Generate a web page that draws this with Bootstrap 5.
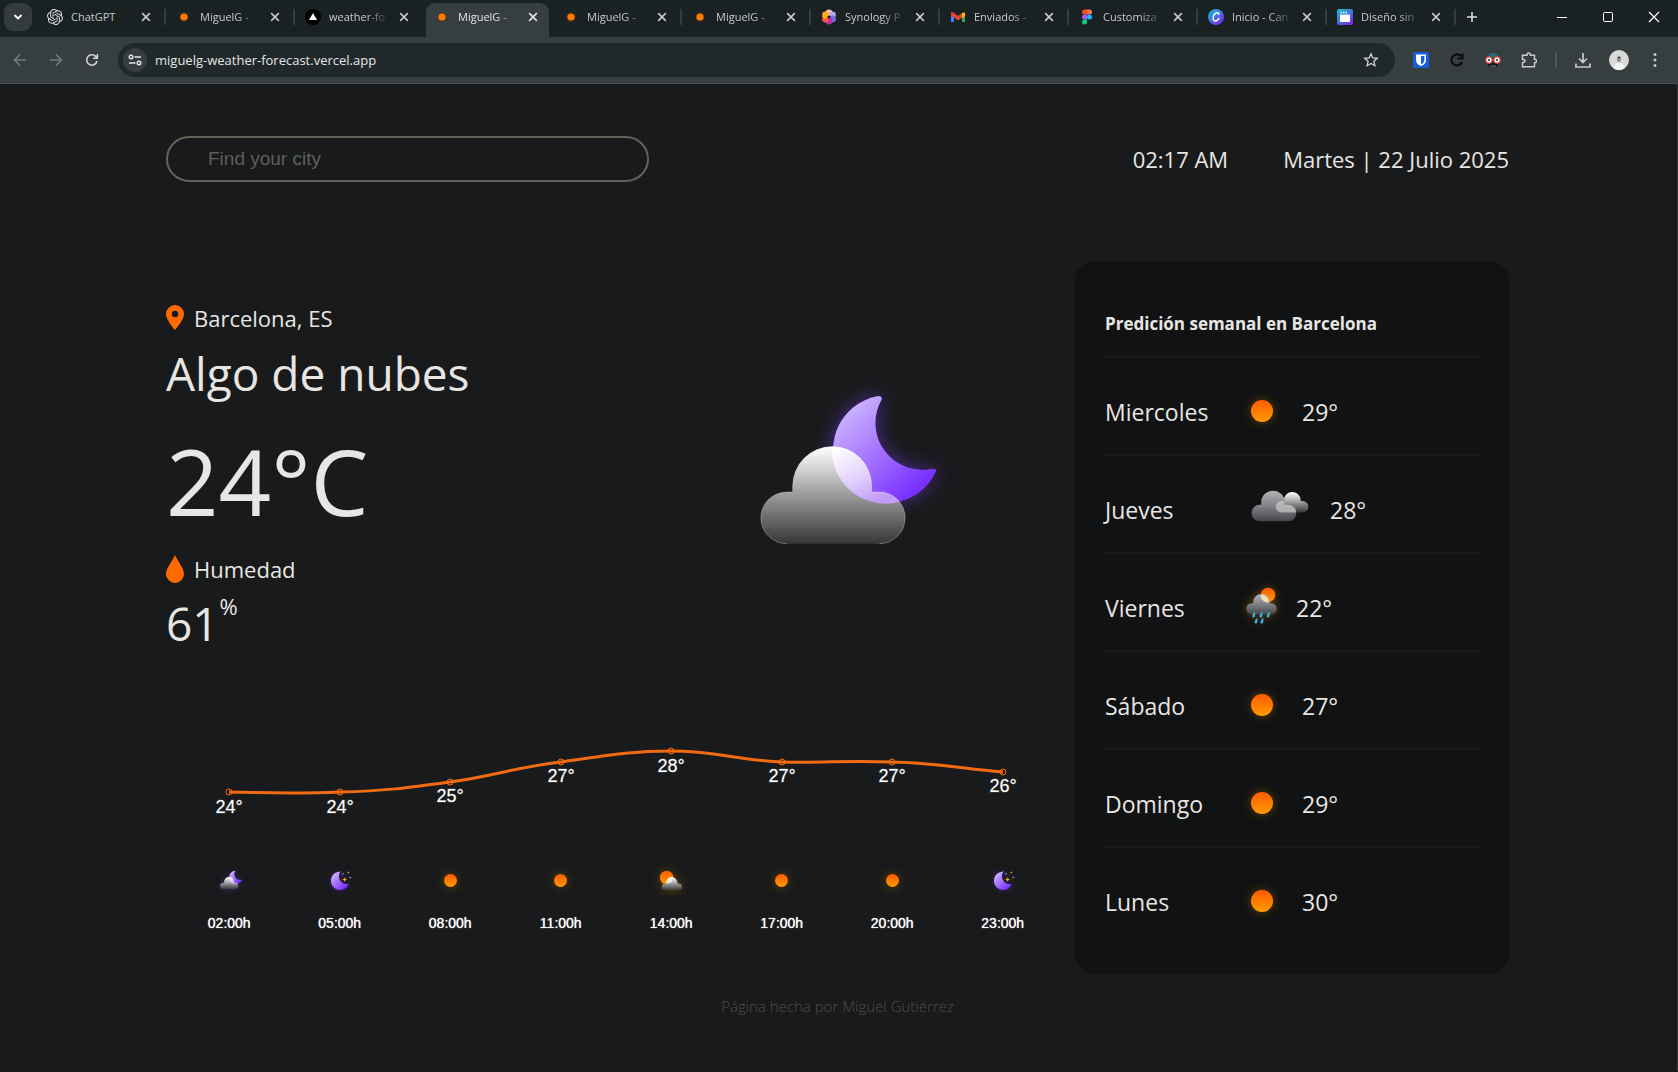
<!DOCTYPE html>
<html lang="es">
<head>
<meta charset="utf-8">
<meta name="viewport" content="width=device-width, initial-scale=1">
<title>MiguelG - Weather forecast</title>
<link href="https://cdn.jsdelivr.net/npm/bootstrap@5.3.0/dist/css/bootstrap.min.css" rel="stylesheet">
<style>
  :root { --page: #191a1b; --ink: #e8e6e3; }
  body { background: var(--page); color: var(--ink); font-family: "Open Sans", "Noto Sans", sans-serif; }
  svg { display: block; flex: none; }
  button { background: none; border: 0; padding: 0; color: inherit; }
  a { color: inherit; text-decoration: none; }

  /* browser frame */
  .tabstrip { height: 37px; background: #1a2122; color: #c6cbcb; padding-left: 4px; }
  .tabmenu { width: 28px; height: 28px; border-radius: 9px; background: #343b3d; margin: 3px 5px 0 0; }
  .tabs-line { min-width: 0; }
  .btab-box { flex: 0 1 129px; height: 34px; padding: 0 14px 0 10px; min-width: 0; }
  .btab-box a { font-size: 11px; line-height: 16px; gap: 8px; min-width: 0; flex: 1; margin-right: 8px; }
  .tab-title { white-space: nowrap; flex: 1; -webkit-mask-image: linear-gradient(90deg, #000 60%, transparent); mask-image: linear-gradient(90deg, #000 60%, transparent); }
  .tab-full { -webkit-mask-image: none; mask-image: none; }
  .sep { position: relative; }
  .sep::after { content: ""; position: absolute; right: 0; top: 9px; width: 2px; height: 16px; background: #353c3e; }
  .live { position: relative; color: #e3e6e6; }
  .live::before { content: ""; position: absolute; inset: 3px 4px -3px 2px; background: #373e40; border-radius: 9px 9px 0 0; }
  .live > * { position: relative; }
  .wincontrols { gap: 34px; margin-right: 18px; height: 34px; color: #fff; }
  .toolbar { height: 47px; background: #373e40; border-bottom: 1px solid #4a5051; padding: 0 15px 0 12px; color: #c6cbcb; }
  .navbtns { gap: 20px; margin-right: 18px; }
  .omnibox { height: 34px; border-radius: 17px; background: #20282a; padding: 0 16px 0 5px; }
  .siteinfo { width: 24px; height: 24px; border-radius: 50%; background: #373e40; }
  .omnibox input { background: none; border: 0; outline: 0; color: #e3e6e6; font-size: 13px; line-height: 20px; padding: 0 8px; }
  .extensions { gap: 20px; margin-left: 18px; }
  .toolsep { width: 2px; height: 16px; background: #4f5658; margin: 0 -2px; }
  .avatar { overflow: visible; }

  /* weather page */
  .viewport { padding-right: 2px; border-right: 1px solid #343637; }
  .sheet { width: 82%; max-width: 1343px; margin: 0 auto; padding-top: 52px; }
  .sheet-head { margin-bottom: 79px; }
  .finder { width: 36%; }
  .finder input { width: 100%; height: 46px; border: 2px solid #676258; border-radius: 23px; background: none; color: var(--ink); padding: 0 40px; outline: 0; font: 19px/24px "Liberation Sans", sans-serif; }
  .finder input::placeholder { color: #5f5e5b; opacity: 1; }
  .t-md { font-size: 22px; line-height: 32px; }
  .stamp { gap: 55px; }
  .t-lg { font-size: 46px; line-height: 60px; }
  .t-xl { font-size: 92px; line-height: 100px; margin-top: 28px; }
  .now { padding: 41px 115px 0 0; min-height: 470px; }
  .now h1 { margin: 9px 0 0; }
  .humid { margin-top: 22px; }
  .t-lg sup { font-size: 22px; top: -26px; margin-left: 1px; }
  .spot { gap: 10px; }
  .sky { margin-top: 68px; }
  .week { width: 434px; flex: none; background: #111213; border-radius: 20px; padding: 30px 30px 28px; }
  .week h2 { font-size: 17px; line-height: 24px; font-weight: 700; margin: 0; padding: 21px 0 20px; border-bottom: 2px solid #17191a; }
  .dayrow { height: 98px; border-bottom: 2px solid #17191a; padding-top: 10px; font-size: 23px; }
  .dayrow:last-child { border-bottom-color: transparent; }
  .dayrow span { padding-top: 2px; }
  .dayname { width: 136px; flex: none; }
  .daytemp { margin-left: 19px; }
  .hours { padding: 0 17px 0 8px; font-family: "Liberation Sans", sans-serif; color: #fff; }
  .hours svg.trend { width: 100%; height: auto; overflow: visible; }
  .trend text { font: 18px "Liberation Sans", sans-serif; fill: #fff; text-anchor: middle; stroke: #fff; stroke-opacity: .25; }
  .hour-icons { height: 26px; margin-top: 46px; }
  .axis { margin: 11px -17px 9px -54px; border-top: 1px solid #151617; opacity: 1; }
  .hour-label { font-size: 14px; line-height: 18px; text-shadow: 0 0 1px #fff; }
  .credit { font-size: 15px; line-height: 20px; font-weight: 300; color: #4c4c4c; padding: 22px 0 55px; }
  .glow-sun { filter: drop-shadow(0 0 5px #8a5a00aa); overflow: visible; }
  .glow-moon { filter: drop-shadow(0 0 3px #7a3cff55); overflow: visible; }
  .glow-big { filter: drop-shadow(0 0 30px #7a3cff88); }
</style>
</head>
<body>
<svg width="0" height="0" class="position-absolute" aria-hidden="true">
  <defs>
    <linearGradient id="gSun" x1="0" y1="0" x2="0" y2="1"><stop offset="0" stop-color="#ff5a00"/><stop offset="1" stop-color="#ff9c00"/></linearGradient>
    <linearGradient id="gMoon" x1="0.1" y1="0.1" x2="0.8" y2="0.9"><stop offset="0" stop-color="#cdb8ff"/><stop offset=".5" stop-color="#a573ff"/><stop offset="1" stop-color="#7830ff"/></linearGradient>
    <linearGradient id="gCloud" x1="0" y1="0" x2="0" y2="1"><stop offset="0" stop-color="#ffffff"/><stop offset=".25" stop-color="#cfcfcf"/><stop offset=".6" stop-color="#868686"/><stop offset="1" stop-color="#363738"/></linearGradient>
    <linearGradient id="gGrey" x1="0" y1="0" x2="0" y2="1"><stop offset="0" stop-color="#b4b4b6"/><stop offset=".5" stop-color="#808184"/><stop offset="1" stop-color="#45474b"/></linearGradient>
    <linearGradient id="gVeil" gradientUnits="userSpaceOnUse" x1="300" y1="230" x2="390" y2="400"><stop offset="0" stop-color="#fff"/><stop offset=".55" stop-color="#e2d2fd"/><stop offset="1" stop-color="#c39cf7"/></linearGradient>
    <linearGradient id="gCanva" x1="0" y1="0" x2=".7" y2="1"><stop offset="0" stop-color="#15c6d0"/><stop offset=".5" stop-color="#3d7be0"/><stop offset="1" stop-color="#7b2be6"/></linearGradient>
    <clipPath id="cBig"><path d="M141 521A78 77 0 0 1 141 366H158V348A118 118 0 0 1 395 348V366H418A77 77 0 0 1 418 521Z"/></clipPath>
    <symbol id="sun" viewBox="0 0 24 24"><circle cx="12" cy="12" r="12" fill="url(#gSun)"/></symbol>
    <symbol id="nightcloud" viewBox="60 75 530 450">
      <path d="M424 90A141 141 0 0 0 580 296Q590 296 587 305A161 161 0 1 1 413 79Q428 76 424 90Z" fill="url(#gMoon)"/>
      <path d="M141 521A78 77 0 0 1 141 366H158V348A118 118 0 0 1 395 348V366H418A77 77 0 0 1 418 521Z" fill="url(#gCloud)"/>
      <circle cx="437" cy="240" r="161" clip-path="url(#cBig)" fill="url(#gVeil)"/>
    </symbol>
    <symbol id="moonstars" viewBox="664 413 66 64">
      <path d="M692 418C682 432 690 456 712 456Q718 454 716 459A28 28 0 1 1 688 418Q693 416 692 418Z" fill="url(#gMoon)"/>
      <path d="M705 435l2 5 5 2-5 2-2 5-2-5-5-2 5-2Z" fill="#ffb800"/><path d="M716 416l1 4 4 1-4 1-1 4-1-4-4-1 4-1Z" fill="#f0b000"/>
      <path d="M700 420l1 4 4 1-4 1-1 4-1-4-4-1 4-1ZM722 431l1 4 4 1-4 1-1 4-1-4-4-1 4-1Z" fill="#a58cff"/>
    </symbol>
    <symbol id="suncloud" viewBox="180 415 72 64">
      <circle cx="203" cy="438" r="21" fill="url(#gSun)"/>
      <path d="M199 477a10 10 0 0 1 0-21h2a17 19 0 0 1 35 0h3a10 10 0 0 1 0 21Z" fill="url(#gCloud)"/>
      <path d="M201 456a17 19 0 0 1 20-19a22 22 0 0 1-4 17Z" fill="#fff2dc" opacity=".8"/>
    </symbol>
    <symbol id="clouds" viewBox="570 750 177 98">
      <path d="M663 819a17 17 0 0 1 0-35h7a26 26 0 0 1 52-4v4h6a17 17 0 0 1 0 35Z" fill="url(#gCloud)"/>
      <path d="M597 846a25 25 0 0 1 0-51h4v-7a36 36 0 0 1 72 0v7h10a25 25 0 0 1 0 51Z" fill="url(#gGrey)"/>
      <path d="M707 819h-44a17 17 0 0 1 0-35h8q2 5 2 11h10q18 2 24 16Z" fill="#d8d8d8" opacity=".6"/>
    </symbol>
    <symbol id="rain" viewBox="556 172 94 112">
      <circle cx="623" cy="196" r="22" fill="url(#gSun)"/>
      <path d="M574 255a17 17 0 0 1 0-34h4v-4a25 24 0 0 1 50 0v4h4a17 17 0 0 1 0 34Z" fill="url(#gGrey)"/>
      <path d="M601 204a22 22 0 0 0 26 14a25 24 0 0 0-26-23Z" fill="#f6dcb4"/>
      <path d="M579 250l5-2-1 14q-8 6-8-2ZM601 250l5-2-1 14q-8 6-8-2ZM623 250l5-2-1 14q-8 6-8-2ZM586 268l5-2-1 14q-8 6-8-2ZM604 268l5-2-1 14q-8 6-8-2Z" fill="#35b4ea"/>
    </symbol>
    <symbol id="x" viewBox="0 0 10 10"><path d="M1.8 1.8l6.4 6.4M8.2 1.8l-6.4 6.4" stroke="currentColor" stroke-width="1.3"/></symbol>
    <symbol id="favsun" viewBox="0 0 16 16"><circle cx="8" cy="8" r="5" fill="#5a3800" opacity=".5"/><circle cx="8" cy="8" r="3.6" fill="#ff7a00"/></symbol>
  </defs>
</svg>

<header>
  <div class="tabstrip d-flex align-items-start">
    <button class="tabmenu d-flex align-items-center justify-content-center" aria-label="Buscar pestañas"><svg width="10" height="10" viewBox="0 0 10 10"><path d="M1.5 3L5 6.500L8.500 3" fill="none" stroke="#fff" stroke-width="1.8"/></svg></button>
    <nav class="tabs-line d-flex flex-fill" aria-label="Pestañas">
      <div class="btab-box sep d-flex align-items-center"><a href="#" class="d-flex align-items-center"><svg width="16" height="16" viewBox="0 0 24 24" fill="#d8dcdc"><path d="M22.2819 9.8211a5.9847 5.9847 0 0 0-.5157-4.9108 6.0462 6.0462 0 0 0-6.5098-2.9A6.0651 6.0651 0 0 0 4.9807 4.1818a5.9847 5.9847 0 0 0-3.9977 2.9 6.0462 6.0462 0 0 0 .7427 7.0966 5.98 5.98 0 0 0 .511 4.9107 6.051 6.051 0 0 0 6.5146 2.9001A5.9847 5.9847 0 0 0 13.2599 24a6.0557 6.0557 0 0 0 5.7718-4.2058 5.9894 5.9894 0 0 0 3.9977-2.9001 6.0557 6.0557 0 0 0-.7475-7.0729zm-9.022 12.6081a4.4755 4.4755 0 0 1-2.8764-1.0408l.1419-.0804 4.7783-2.7582a.7948.7948 0 0 0 .3927-.6813v-6.7369l2.02 1.1686a.071.071 0 0 1 .038.052v5.5826a4.504 4.504 0 0 1-4.4945 4.4944zm-9.6607-4.1254a4.4708 4.4708 0 0 1-.5346-3.0137l.142.0852 4.783 2.7582a.7712.7712 0 0 0 .7806 0l5.8428-3.3685v2.3324a.0804.0804 0 0 1-.0332.0615L9.74 19.9502a4.4992 4.4992 0 0 1-6.1408-1.6464zM2.3408 7.8956a4.485 4.485 0 0 1 2.3655-1.9728V11.6a.7664.7664 0 0 0 .3879.6765l5.8144 3.3543-2.0201 1.1685a.0757.0757 0 0 1-.071 0l-4.8303-2.7865A4.504 4.504 0 0 1 2.3408 7.872zm16.5963 3.8558L13.1038 8.364 15.1192 7.2a.0757.0757 0 0 1 .071 0l4.8303 2.7913a4.4944 4.4944 0 0 1-.6765 8.1042v-5.6772a.79.79 0 0 0-.407-.667zm2.0107-3.0231l-.142-.0852-4.7735-2.7818a.7759.7759 0 0 0-.7854 0L9.409 9.2297V6.8974a.0662.0662 0 0 1 .0284-.0615l4.8303-2.7866a4.4992 4.4992 0 0 1 6.6802 4.66zM8.3065 12.863l-2.02-1.1638a.0804.0804 0 0 1-.038-.0567V6.0742a4.4992 4.4992 0 0 1 7.3757-3.4537l-.142.0805L8.704 5.459a.7948.7948 0 0 0-.3927.6813zm1.0976-2.3654l2.602-1.4998 2.6069 1.4998v2.9994l-2.5974 1.4997-2.6067-1.4997Z"/></svg><span class="tab-title tab-full">ChatGPT</span></a><button aria-label="Cerrar"><svg width="12" height="12"><use href="#x"/></svg></button></div>
      <div class="btab-box sep d-flex align-items-center"><a href="#" class="d-flex align-items-center"><svg width="16" height="16"><use href="#favsun"/></svg><span class="tab-title">MiguelG -</span></a><button aria-label="Cerrar"><svg width="12" height="12"><use href="#x"/></svg></button></div>
      <div class="btab-box d-flex align-items-center"><a href="#" class="d-flex align-items-center"><svg width="16" height="16" viewBox="0 0 16 16"><circle cx="8" cy="8" r="8" fill="#000"/><path d="M8 4l4 7H4Z" fill="#fff"/></svg><span class="tab-title">weather-fo</span></a><button aria-label="Cerrar"><svg width="12" height="12"><use href="#x"/></svg></button></div>
      <div class="btab-box live d-flex align-items-center"><a href="#" class="d-flex align-items-center" aria-current="page"><svg width="16" height="16"><use href="#favsun"/></svg><span class="tab-title">MiguelG -</span></a><button aria-label="Cerrar"><svg width="12" height="12"><use href="#x"/></svg></button></div>
      <div class="btab-box sep d-flex align-items-center"><a href="#" class="d-flex align-items-center"><svg width="16" height="16"><use href="#favsun"/></svg><span class="tab-title">MiguelG -</span></a><button aria-label="Cerrar"><svg width="12" height="12"><use href="#x"/></svg></button></div>
      <div class="btab-box sep d-flex align-items-center"><a href="#" class="d-flex align-items-center"><svg width="16" height="16"><use href="#favsun"/></svg><span class="tab-title">MiguelG -</span></a><button aria-label="Cerrar"><svg width="12" height="12"><use href="#x"/></svg></button></div>
      <div class="btab-box sep d-flex align-items-center"><a href="#" class="d-flex align-items-center"><svg width="16" height="16" viewBox="0 0 16 16"><circle cx="8" cy="4" r="3.400" fill="#f6c5b5"/><circle cx="11.500" cy="6" r="3.400" fill="#b9a2ee"/><circle cx="11.500" cy="10" r="3.400" fill="#7a6be0"/><circle cx="8" cy="12" r="3.400" fill="#c02fa8"/><circle cx="4.500" cy="10" r="3.400" fill="#ff5b45"/><circle cx="4.500" cy="6" r="3.400" fill="#ffa818"/><circle cx="8" cy="8" r="1.600" fill="#2a1030"/></svg><span class="tab-title">Synology P</span></a><button aria-label="Cerrar"><svg width="12" height="12"><use href="#x"/></svg></button></div>
      <div class="btab-box sep d-flex align-items-center"><a href="#" class="d-flex align-items-center"><svg width="16" height="16" viewBox="0 0 16 16"><path d="M1 4v9h3V6Z" fill="#4285f4"/><path d="M15 4v9h-3V6Z" fill="#34a853"/><path d="M12 4.500l1.500-1.200Q15 3 15 4.500V7l-3 2Z" fill="#fbbc04"/><path d="M1 4.500Q1 2.500 3 3.300L8 7l4-3v4.500l-4 3-4-3L1 6.500Z" fill="#ea4335"/></svg><span class="tab-title">Enviados -</span></a><button aria-label="Cerrar"><svg width="12" height="12"><use href="#x"/></svg></button></div>
      <div class="btab-box sep d-flex align-items-center"><a href="#" class="d-flex align-items-center"><svg width="16" height="16" viewBox="0 0 16 16"><path d="M8 .5H5.500a2.500 2.500 0 0 0 0 5H8Z" fill="#f24e1e"/><path d="M8 .5h2.500a2.500 2.500 0 0 1 0 5H8Z" fill="#ff7262"/><path d="M8 5.500H5.500a2.500 2.500 0 0 0 0 5H8Z" fill="#a259ff"/><circle cx="10.500" cy="8" r="2.500" fill="#1abcfe"/><path d="M8 10.500H5.500A2.500 2.500 0 1 0 8 13Z" fill="#0acf83"/></svg><span class="tab-title">Customiza</span></a><button aria-label="Cerrar"><svg width="12" height="12"><use href="#x"/></svg></button></div>
      <div class="btab-box sep d-flex align-items-center"><a href="#" class="d-flex align-items-center"><svg width="16" height="16" viewBox="0 0 16 16"><circle cx="8" cy="8" r="8" fill="url(#gCanva)"/><path d="M10.800 5.500Q10.800 3.500 9 3.800C6.500 4.200 4.800 7.500 5.200 10Q6 13 9 11.500Q10.300 10.600 11 9.300" fill="none" stroke="#fff" stroke-width="1.400" stroke-linecap="round"/></svg><span class="tab-title">Inicio - Can</span></a><button aria-label="Cerrar"><svg width="12" height="12"><use href="#x"/></svg></button></div>
      <div class="btab-box sep d-flex align-items-center"><a href="#" class="d-flex align-items-center"><svg width="16" height="16" viewBox="0 0 16 16"><rect width="16" height="16" rx="2" fill="url(#gCanva)"/><rect x="3" y="5.500" width="10" height="7.500" rx="1" fill="#fff"/><path d="M3.500 3.500h1.500M6 3.500h1.500M8.500 3.500H10" stroke="#fff" stroke-width="1.300"/></svg><span class="tab-title">Diseño sin</span></a><button aria-label="Cerrar"><svg width="12" height="12"><use href="#x"/></svg></button></div>
      <button class="ms-2 align-self-center" aria-label="Nueva pestaña"><svg width="16" height="16" viewBox="0 0 16 16"><path d="M8 3v10M3 8h10" stroke="#d8dcdc" stroke-width="1.600"/></svg></button>
    </nav>
    <div class="wincontrols d-flex align-items-center">
      <button aria-label="Minimizar"><svg width="12" height="12" viewBox="0 0 12 12"><path d="M1 6.500h10" stroke="#fff"/></svg></button>
      <button aria-label="Maximizar"><svg width="12" height="12" viewBox="0 0 12 12"><rect x="1.500" y="1.500" width="9" height="9" rx="1" fill="none" stroke="#fff"/></svg></button>
      <button aria-label="Cerrar ventana"><svg width="12" height="12" viewBox="0 0 12 12"><path d="M1 1l10 10M11 1L1 11" stroke="#fff" stroke-width="1.200"/></svg></button>
    </div>
  </div>
  <div class="toolbar d-flex align-items-center">
    <div class="navbtns d-flex">
      <button aria-label="Atrás"><svg width="16" height="16" viewBox="0 0 16 16" fill="none" stroke="#747b7c" stroke-width="1.600"><path d="M14 8H3M8 2.500L2.500 8L8 13.500"/></svg></button>
      <button aria-label="Adelante"><svg width="16" height="16" viewBox="0 0 16 16" fill="none" stroke="#747b7c" stroke-width="1.600"><path d="M2 8h11M8 2.500L13.500 8L8 13.500"/></svg></button>
      <button aria-label="Recargar"><svg width="16" height="16" viewBox="0 0 16 16" fill="none" stroke="#d0d5d5" stroke-width="1.600"><path d="M13 9A5.200 5.200 0 1 1 11.500 4.200L13 6M13.300 2v4.300H9"/></svg></button>
    </div>
    <form class="omnibox d-flex align-items-center flex-fill">
      <button type="button" class="siteinfo d-flex align-items-center justify-content-center" aria-label="Información del sitio"><svg width="14" height="12" viewBox="0 0 14 12" fill="none" stroke="#e3e6e6" stroke-width="1.400"><circle cx="3" cy="3" r="1.800"/><path d="M6.500 3H13M1 9h6.500"/><circle cx="11" cy="9" r="1.800"/></svg></button>
      <input class="flex-fill" type="text" value="miguelg-weather-forecast.vercel.app" aria-label="Dirección">
      <button type="button" aria-label="Favoritos"><svg width="16" height="16" viewBox="0 0 16 16"><path d="M8 1.800l1.800 4.100 4.500.4-3.400 3 1 4.400L8 11.400l-3.900 2.300 1-4.400-3.400-3 4.500-.4Z" fill="none" stroke="#d0d5d5" stroke-width="1.300"/></svg></button>
    </form>
    <div class="extensions d-flex align-items-center">
      <button aria-label="Bitwarden"><svg width="16" height="16" viewBox="0 0 16 16"><rect width="16" height="16" rx="2" fill="#175ddc"/><path d="M3 2.500h10v5.500q0 4-5 6-5-2-5-6Z" fill="#fff"/><path d="M8 4v8.300q3.400-1.600 3.400-4.300V4Z" fill="#175ddc"/></svg></button>
      <button aria-label="Recarga automática"><svg width="16" height="16" viewBox="0 0 16 16" fill="none" stroke="#0b0d0d" stroke-width="2.200"><path d="M13 10A5.500 5.500 0 1 1 12 4.200M13.500 1.500v5H8.500"/></svg></button>
      <button aria-label="Extensión"><svg width="16" height="16" viewBox="0 0 16 16"><path d="M2 6Q3 1 8 1t6 5Z" fill="#256a7a"/><rect x="3" y="6" width="10" height="9" rx="2" fill="#15191c"/><circle cx="4" cy="8" r="3.200" fill="#fff" stroke="#d94a3a" stroke-width="1.300"/><circle cx="12" cy="8" r="3.200" fill="#fff" stroke="#d94a3a" stroke-width="1.300"/><circle cx="4" cy="8" r="1" fill="#222"/><circle cx="12" cy="8" r="1" fill="#222"/><path d="M5.500 14h5" stroke="#ddd" stroke-dasharray="1 1"/></svg></button>
      <button aria-label="Extensiones"><svg width="16" height="16" viewBox="0 0 16 16"><path d="M1.500 3.300H6Q6 1 7.800 1t1.700 2.300h4v4Q15.500 7.500 15.500 9t-2 1.700v4H1.500v-4.200Q4 10.300 4 8.800T1.500 7.200Z" fill="none" stroke="#c6cbcb" stroke-width="1.500"/></svg></button>
      <span class="toolsep"></span>
      <button aria-label="Descargas"><svg width="16" height="16" viewBox="0 0 16 16" fill="none" stroke="#c6cbcb" stroke-width="1.700"><path d="M8 1v9M4 6.500l4 4 4-4M1 11.500V15h14v-3.500"/></svg></button>
      <button aria-label="Perfil"><svg class="avatar" width="16" height="16" viewBox="2 2 16 16"><circle cx="10" cy="10" r="10" fill="#d9d9d8"/><path d="M4 18q1-5 6-5t6 5a10 10 0 0 1-12 0Z" fill="#f4f4f4"/><ellipse cx="10" cy="9" rx="2" ry="3" fill="#8d8d8b"/><path d="M9 7h2v1H9Z" fill="#333"/></svg></button>
      <button aria-label="Menú"><svg width="16" height="16" viewBox="0 0 16 16" fill="#c6cbcb"><circle cx="8" cy="2.500" r="1.500"/><circle cx="8" cy="8" r="1.500"/><circle cx="8" cy="13.500" r="1.500"/></svg></button>
    </div>
  </div>
</header>

<div class="viewport">
  <div class="sheet">
    <div class="sheet-head d-flex justify-content-between align-items-center">
      <form class="finder"><input id="city" type="text" placeholder="Find your city" aria-label="Find your city"></form>
      <div class="stamp d-flex t-md"><span>02:17 AM</span><span>Martes | 22 Julio 2025</span></div>
    </div>

    <main class="d-flex">
      <div class="flex-fill">
        <section class="now d-flex justify-content-between align-items-start">
          <div>
            <div class="spot d-flex align-items-center t-md"><svg width="18" height="26" viewBox="0 0 18 26"><path fill-rule="evenodd" d="M9 0a9 9 0 0 1 9 9c0 6-9 16-9 16S0 15 0 9a9 9 0 0 1 9-9Zm0 5.800a3.200 3.200 0 1 0 0 6.400 3.200 3.200 0 0 0 0-6.400Z" fill="#ff6a00"/></svg>Barcelona, ES</div>
            <h1 class="t-lg fw-normal">Algo de nubes</h1>
            <div class="t-xl">24°C</div>
            <div class="spot humid d-flex align-items-center t-md"><svg width="18" height="28" viewBox="0 0 18 28"><path d="M9 0C12 7 18 13 18 19a9 9 0 0 1-18 0C0 13 6 7 9 0Z" fill="#ff6a00"/></svg>Humedad</div>
            <div class="t-lg mt-2">61<sup>%</sup></div>
          </div>
          <svg class="sky" width="220" height="200" viewBox="0 0 660 600" role="img" aria-label="Algo de nubes">
            <path class="glow-big" d="M424 90A141 141 0 0 0 580 296Q590 296 587 305A161 161 0 1 1 413 79Q428 76 424 90Z" fill="#8a4dff"/>
            <use href="#nightcloud" x="60" y="75" width="530" height="450"/>
            <path d="M141 521A78 77 0 0 1 141 366H158V348A118 118 0 0 1 395 348V366H418A77 77 0 0 1 418 521" fill="none" stroke="#fff" stroke-opacity=".3" stroke-width="3"/>
          </svg>
        </section>

        <section class="hours">
          <svg class="trend" viewBox="0 0 884 90" role="img" aria-label="Temperatura por horas">
            <g fill="none" stroke="#ff6a00">
              <path stroke="#f26b12" stroke-width="3" d="M55 61C99 62 122 63 166 61C210 60 233 57 276 51C321 45 342 36 387 31C430 25 454 20 497 20C542 20 563 29 608 31C652 32 674 29 718 31C763 32 785 37 829 41"/>
              <g><circle cx="55" cy="61" r="3"/><circle cx="166" cy="61" r="3"/><circle cx="276" cy="51" r="3"/><circle cx="387" cy="31" r="3"/><circle cx="497" cy="20" r="3"/><circle cx="608" cy="31" r="3"/><circle cx="718" cy="31" r="3"/><circle cx="829" cy="41" r="3"/></g>
            </g>
            <text x="55" y="82">24°</text><text x="166" y="82">24°</text><text x="276" y="71">25°</text><text x="387" y="51">27°</text><text x="497" y="41">28°</text><text x="608" y="51">27°</text><text x="718" y="51">27°</text><text x="829" y="61">26°</text>
          </svg>
          <div class="row g-0 hour-icons align-items-center">
            <div class="col d-flex justify-content-center"><svg class="glow-moon" width="26" height="20" viewBox="0 0 26 20"><use href="#nightcloud" x="4" width="22" height="20"/></svg></div>
            <div class="col d-flex justify-content-center"><svg class="glow-moon" width="26" height="21" viewBox="0 0 26 21"><use href="#moonstars" x="4" width="22" height="21"/></svg></div>
            <div class="col d-flex justify-content-center"><svg class="glow-sun" width="13" height="13"><use href="#sun"/></svg></div>
            <div class="col d-flex justify-content-center"><svg class="glow-sun" width="13" height="13"><use href="#sun"/></svg></div>
            <div class="col d-flex justify-content-center"><svg class="glow-sun" width="24" height="21"><use href="#suncloud"/></svg></div>
            <div class="col d-flex justify-content-center"><svg class="glow-sun" width="13" height="13"><use href="#sun"/></svg></div>
            <div class="col d-flex justify-content-center"><svg class="glow-sun" width="13" height="13"><use href="#sun"/></svg></div>
            <div class="col d-flex justify-content-center"><svg class="glow-moon" width="26" height="21" viewBox="0 0 26 21"><use href="#moonstars" x="4" width="22" height="21"/></svg></div>
          </div>
          <hr class="axis">
          <div class="row g-0 text-center hour-label">
            <div class="col">02:00h</div><div class="col">05:00h</div><div class="col">08:00h</div><div class="col">11:00h</div><div class="col">14:00h</div><div class="col">17:00h</div><div class="col">20:00h</div><div class="col">23:00h</div>
          </div>
        </section>
      </div>

      <aside class="week position-relative">
        <h2>Predición semanal en Barcelona</h2>
        <ul class="list-unstyled mb-0">
          <li class="dayrow d-flex align-items-center"><span class="dayname">Miercoles</span><svg class="glow-sun" width="42" height="22"><use href="#sun"/></svg><span class="daytemp">29°</span></li>
          <li class="dayrow d-flex align-items-center"><span class="dayname">Jueves</span><svg width="70" height="40" viewBox="0 0 70 40"><use href="#clouds" x="10" y="1" width="58" height="32"/></svg><span class="daytemp">28°</span></li>
          <li class="dayrow d-flex align-items-center"><span class="dayname">Viernes</span><svg class="glow-sun" width="36" height="42" viewBox="0 0 36 42"><use href="#rain" x="5" y="1" width="31" height="37"/></svg><span class="daytemp">22°</span></li>
          <li class="dayrow d-flex align-items-center"><span class="dayname">Sábado</span><svg class="glow-sun" width="42" height="22"><use href="#sun"/></svg><span class="daytemp">27°</span></li>
          <li class="dayrow d-flex align-items-center"><span class="dayname">Domingo</span><svg class="glow-sun" width="42" height="22"><use href="#sun"/></svg><span class="daytemp">29°</span></li>
          <li class="dayrow d-flex align-items-center"><span class="dayname">Lunes</span><svg class="glow-sun" width="42" height="22"><use href="#sun"/></svg><span class="daytemp">30°</span></li>
        </ul>
      </aside>
    </main>
    <footer class="credit text-center">Página hecha por Miguel Gutiérrez</footer>
  </div>
</div>
<script src="https://cdn.jsdelivr.net/npm/bootstrap@5.3.0/dist/js/bootstrap.bundle.min.js"></script>
</body>
</html>
